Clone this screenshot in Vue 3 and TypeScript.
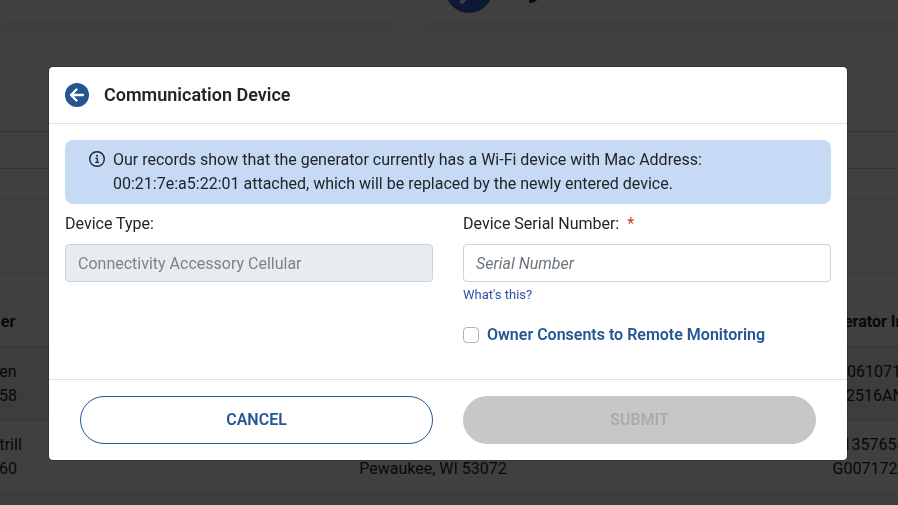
<script setup lang="ts">
import { ref } from 'vue'

interface Row {
  owner: string[]
  address: string[]
  generator: string[]
}

const rows: Row[] = [
  { owner: ['en', '58'], address: ['', ''], generator: ['3006107193', 'G2516AN0'] },
  { owner: ['ttrill', '60'], address: ['', 'Pewaukee, WI 53072'], generator: ['313576580', 'G00717280'] },
  { owner: ['', ''], address: ['', ''], generator: ['', ''] },
]

const macAddress = '00:21:7e:a5:22:01'
const deviceType = ref('Connectivity Accessory Cellular')
const serialNumber = ref('')
const consent = ref(false)
</script>

<template>
  <div class="page" inert>
    <div class="cards">
      <div class="card"></div>
      <div class="card">
        <svg class="card-icon" viewBox="0 0 48 48" aria-hidden="true">
          <circle cx="24" cy="24" r="24" fill="#3662c8" />
          <path d="M17 37l14-16" stroke="#fff" stroke-width="4" stroke-linecap="round" />
        </svg>
        <span class="card-count">9</span>
      </div>
    </div>
    <div class="search"></div>
    <table class="list">
      <colgroup>
        <col class="col-edge" />
        <col />
        <col class="col-last" />
      </colgroup>
      <thead>
        <tr>
          <th><span class="line">er</span></th>
          <th></th>
          <th><span class="line">Generator Info #</span></th>
        </tr>
      </thead>
      <tbody>
        <tr v-for="(row, i) in rows" :key="i">
          <td v-for="(cell, j) in [row.owner, row.address, row.generator]" :key="j">
            <span v-for="(text, k) in cell" :key="k" class="line">{{ text }}</span>
          </td>
        </tr>
      </tbody>
    </table>
  </div>

  <div class="backdrop">
    <form class="modal" role="dialog" aria-labelledby="modal-title" @submit.prevent>
      <header class="modal-header">
        <button type="button" class="back" aria-label="Back">
          <svg viewBox="0 0 24 24" aria-hidden="true">
            <circle cx="12" cy="12" r="12" fill="#255694" />
            <path d="M18 12H6.5M11.5 6.5L6 12l5.500 5.500" fill="none" stroke="#fff" stroke-width="2.300" stroke-linecap="round" stroke-linejoin="round" />
          </svg>
        </button>
        <h1 id="modal-title">Communication Device</h1>
      </header>

      <div class="modal-body">
        <div class="notice" role="alert">
          <svg class="info" viewBox="0 0 16 16" aria-hidden="true">
            <circle cx="8" cy="8" r="7.300" fill="none" stroke="#212529" stroke-width="1.400" />
            <circle cx="8" cy="4.700" r="1" fill="#212529" />
            <path d="M6.500 7.300H8.300V11.300M6.300 11.400H10" fill="none" stroke="#212529" stroke-width="1.300" />
          </svg>
          <p>
            Our records show that the generator currently has a Wi-Fi device with Mac Address:<br />
            {{ macAddress }} attached, which will be replaced by the newly entered device.
          </p>
        </div>

        <div class="fields">
          <div class="field">
            <label for="device-type">Device Type:</label>
            <input id="device-type" v-model="deviceType" class="control" type="text" disabled />
          </div>
          <div class="field">
            <label for="serial">Device Serial Number: <span class="required">*</span></label>
            <input id="serial" v-model="serialNumber" class="control" type="text" placeholder="Serial Number" />
            <a class="hint" href="#">What's this?</a>
            <label class="consent">
              <input v-model="consent" type="checkbox" />
              Owner Consents to Remote Monitoring
            </label>
          </div>
        </div>
      </div>

      <footer class="modal-footer">
        <button type="button" class="btn btn-outline">CANCEL</button>
        <button type="submit" class="btn btn-submit" disabled>SUBMIT</button>
      </footer>
    </form>
  </div>
</template>

<style>
body {
  background: #fff;
  overflow: hidden;
}
</style>

<style scoped>
* {
  box-sizing: border-box;
}

.page,
.backdrop {
  font: 400 16px/24px Roboto, "Liberation Sans", sans-serif;
  color: #212529;
}

/* Page underneath */
.page {
  height: 100vh;
  overflow: hidden;
}

.cards {
  display: grid;
  grid-template-columns: 395fr 473fr;
  gap: 30px;
}

.card {
  display: flex;
  align-items: flex-end;
  height: 22px;
  border-radius: 0 0 4px 4px;
  box-shadow: 0 8px 16px rgba(0, 0, 0, 0.08);
}

.card:last-child {
  padding: 0 20px 9px;
  gap: 32px;
}

.card-icon {
  flex: none;
  width: 48px;
  height: 48px;
}

.card-count {
  font-size: 28px;
  font-weight: 700;
  line-height: 38px;
}

.search {
  height: 38px;
  margin: 109px 0 29px;
  border: solid #ced4da;
  border-width: 1px 0;
}

.list {
  width: 100%;
  table-layout: fixed;
  border-spacing: 0;
  border-top: 1px solid #dee2e6;
}

.col-edge {
  width: 16px;
}

.col-last {
  width: 48px;
}

th,
td {
  padding: 12px 0;
  border-top: 1px solid #dee2e6;
}

th {
  padding-top: 36px;
  border-bottom: 1px solid #dee2e6;
}

thead::before {
  content: "";
  display: table-row;
  height: 74px;
}

tbody tr:nth-child(odd) {
  background: #f2f2f2;
}

.line {
  display: flex;
  justify-content: center;
  height: 24px;
  white-space: nowrap;
}

th .line {
  font-weight: 700;
}

/* Dialog */
.backdrop {
  position: fixed;
  inset: 0;
  display: flex;
  align-items: flex-start;
  justify-content: center;
  padding: 66px 50px 0 48px;
  background: rgba(0, 0, 0, 0.75);
}

.modal {
  width: 100%;
  max-width: 800px;
  border: 1px solid rgba(0, 0, 0, 0.2);
  border-radius: 5px;
  background: #fff;
  background-clip: padding-box;
}

.modal-header {
  display: flex;
  align-items: center;
  gap: 15px;
  padding: 16px;
  border-bottom: 1px solid #dee2e6;
}

.back {
  width: 24px;
  height: 24px;
  padding: 0;
  border: 0;
  background: none;
}

.back svg {
  display: block;
}

h1 {
  margin: 0;
  font-size: 18px;
  font-weight: 600;
  line-height: 24px;
}

.modal-body {
  padding: 16px;
}

.notice {
  display: flex;
  gap: 8px;
  margin-bottom: 8px;
  padding: 8px 24px;
  border-radius: 8px;
  background: #c6daf5;
}

.notice p {
  margin: 0;
}

.info {
  flex: none;
  width: 16px;
  height: 16px;
  margin-top: 3px;
}

.fields {
  display: grid;
  grid-template-columns: 1fr 1fr;
  gap: 30px;
}

.field {
  display: flex;
  flex-direction: column;
  align-items: flex-start;
}

.required {
  margin-left: 4px;
  color: #c8382c;
}

.control {
  width: 100%;
  height: 38px;
  margin-top: 8px;
  padding: 6px 12px;
  border: 1px solid #ced4da;
  border-radius: 4px;
  background: #fff;
  color: #495057;
  font: inherit;
}

.control:disabled {
  background: #e9ecef;
  color: #7b838a;
}

.control::placeholder {
  color: #6c757d;
  font-style: italic;
}

.hint {
  margin-top: 3px;
  color: #3350a8;
  font-size: 13px;
  line-height: 20px;
  text-decoration: none;
}

.consent {
  display: flex;
  align-items: center;
  gap: 8px;
  margin: 18px 0 16px;
  color: #255694;
  font-weight: 600;
}

.consent input {
  appearance: none;
  width: 16px;
  height: 16px;
  margin: 0;
  border: 1px solid #adb5bd;
  border-radius: 4px;
  background: #fff;
}

.modal-footer {
  display: grid;
  grid-template-columns: 1fr 1fr;
  gap: 30px;
  padding: 16px 31px;
  border-top: 1px solid #dee2e6;
}

.btn {
  height: 48px;
  border: 1px solid #255694;
  border-radius: 24px;
  font: inherit;
  font-weight: 600;
}

.btn-outline {
  background: #fff;
  color: #255694;
}

.btn-submit {
  border-color: #c8c6c7;
  background: #c8c6c7;
  color: #acaaab;
}
</style>
